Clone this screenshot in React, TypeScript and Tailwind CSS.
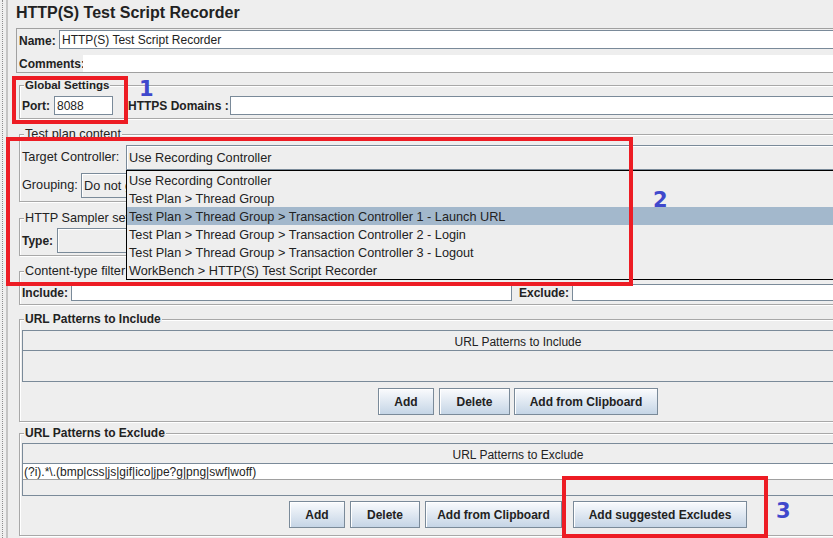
import React from 'react'

const font = { fontFamily: '"Liberation Sans", Arial, sans-serif' }

function Group({ title, className, small, children }: { title: string; className: string; small?: boolean; children?: React.ReactNode }) {
  return (
    <div className={`relative mx-[3px] border border-[#a8a8a8] shadow-[inset_1px_1px_0_#ffffff,1px_1px_0_#ffffff] ${className}`}>
      <span
        className={`absolute left-[4px] top-[-8px] bg-[#eeeeee] px-[1px] leading-[15px] font-bold text-[#222] ${small ? 'text-[11.5px]' : 'text-[12px]'}`}
      >
        {title}
      </span>
      {children}
    </div>
  )
}

// title partly hidden behind the open popup, so it is clipped at the popup's left edge
function GroupPlain({ title, className, children }: { title: string; className: string; children?: React.ReactNode }) {
  return (
    <div className={`relative mx-[3px] border border-[#a8a8a8] shadow-[inset_1px_1px_0_#ffffff,1px_1px_0_#ffffff] ${className}`}>
      <span className="absolute left-[4px] top-[-8px] max-w-[102px] overflow-hidden whitespace-nowrap bg-[#eeeeee] px-[1px] leading-[15px] text-[12.7px] text-[#222]">
        {title}
      </span>
      {children}
    </div>
  )
}

function Btn({ label, w }: { label: string; w: string }) {
  return (
    <div
      className={`${w} h-[27px] flex items-center justify-center border border-[#7a8a99] bg-linear-to-b from-[#fafbfd] to-[#c5d5e6] text-[12px] font-bold text-[#222] shadow-[inset_1px_1px_0_#ffffff]`}
    >
      {label}
    </div>
  )
}

const popupItems = [
  'Use Recording Controller',
  'Test Plan > Thread Group',
  'Test Plan > Thread Group > Transaction Controller 1 - Launch URL',
  'Test Plan > Thread Group > Transaction Controller 2 - Login',
  'Test Plan > Thread Group > Transaction Controller 3 - Logout',
  'WorkBench > HTTP(S) Test Script Recorder',
]

const numFont = { fontFamily: '"DejaVu Sans", sans-serif' }

export default function App() {
  return (
    <div className="relative w-[833px] h-[538px] overflow-hidden bg-[#eeeeee] text-[#222]" style={font}>
      <div className="flex">
        {/* window edge */}
        <div className="w-[16px] h-[538px] flex shrink-0">
          <div className="ml-[2px] w-[1px] h-full border-l border-dotted border-[#8c8c8c]" />
          <div className="ml-[3px] w-[2px] h-full bg-[#c4c4c4]" />
        </div>

        <div className="w-[1004px] shrink-0">
          {/* title */}
          <div className="h-[28px] text-[16px] font-bold leading-[26px]">HTTP(S) Test Script Recorder</div>

          {/* name / comments */}
          <div className="border border-[#a0a0a0] h-[45px]">
            <div className="mt-[1px] flex h-[19px] items-center">
              <span className="w-[42px] pl-[2px] pt-[2px] text-[12px] font-bold">Name:</span>
              <div className="flex-1 h-[19px] bg-white border border-[#7a8a99] pl-[2px] text-[12px] leading-[19px]">
                HTTP(S) Test Script Recorder
              </div>
            </div>
            <div className="mt-[6px] flex h-[17px] items-center">
              <span className="w-[66px] pl-[2px] pt-[1px] text-[12px] font-bold">Comments:</span>
              <div className="flex-1 h-[17px] bg-white" />
            </div>
          </div>

          {/* global settings */}
          <Group title="Global Settings" small className="mt-[12px] h-[34px]">
            <div className="mt-[10px] flex h-[19px] items-center">
              <span className="w-[34px] pl-[2px] pt-[1px] text-[12px] font-bold">Port:</span>
              <div className="w-[59px] h-[19px] bg-white border border-[#7a8a99] pl-[2px] text-[12px] leading-[18px]">8088</div>
              <span className="ml-[15px] w-[102px] pt-[1px] text-[12px] font-bold">HTTPS Domains :</span>
              <div className="flex-1 h-[19px] bg-white border border-[#7a8a99]" />
            </div>
          </Group>

          {/* test plan content */}
          <GroupPlain title="Test plan content" className="mt-[15px] h-[68px]">
            <div className="mt-[10px] flex h-[25px] items-center">
              <span className="w-[106px] pl-[2px] pt-[1px] text-[12.7px]">Target Controller:</span>
              <div className="flex-1 h-[25px] bg-[#eeeeee] border border-[#7a8a99] shadow-[inset_1px_1px_0_#ffffff] pl-[2px] text-[12.7px] leading-[24px]">
                Use Recording Controller
              </div>
            </div>
            <div className="mt-[3px] flex h-[25px] items-center">
              <span className="w-[61px] pl-[2px] pt-[1px] text-[12.7px]">Grouping:</span>
              <div className="w-[330px] h-[25px] bg-[#eeeeee] border border-[#7a8a99] shadow-[inset_1px_1px_0_#ffffff] pl-[2px] text-[12.7px] leading-[24px]">
                <span className="block w-[42px] overflow-hidden whitespace-nowrap">Do not group samplers</span>
              </div>
            </div>
          </GroupPlain>

          {/* http sampler settings */}
          <GroupPlain title="HTTP Sampler settings" className="mt-[16px] h-[38px]">
            <div className="mt-[9px] flex h-[25px] items-center">
              <span className="w-[37px] pl-[2px] pt-[1px] text-[12px] font-bold">Type:</span>
              <div className="w-[260px] h-[25px] bg-[#eeeeee] border border-[#7a8a99] shadow-[inset_1px_1px_0_#ffffff]" />
            </div>
          </GroupPlain>

          {/* content-type filter */}
          <GroupPlain title="Content-type filter" className="mt-[15px] h-[34px]">
            <div className="mt-[12px] flex h-[17px] items-center">
              <span className="w-[51px] pl-[2px] text-[12px] font-bold">Include:</span>
              <div className="w-[441px] h-[17px] bg-white border border-[#7a8a99]" />
              <span className="ml-[7px] w-[53px] text-[12px] font-bold">Exclude:</span>
              <div className="flex-1 h-[17px] bg-white border border-[#7a8a99]" />
            </div>
          </GroupPlain>

          {/* url include */}
          <Group title="URL Patterns to Include" className="mt-[14px] h-[103px]">
            <div className="mx-[2px] mt-[10px] h-[52px] border border-[#7a8a99]">
              <div className="h-[20px] border-b border-[#7a8a99] pt-[1px] text-center text-[12px] leading-[20px]">URL Patterns to Include</div>
            </div>
            <div className="mt-[6px] flex justify-center">
              <Btn label="Add" w="w-[56px]" />
              <div className="ml-[5px]"><Btn label="Delete" w="w-[71px]" /></div>
              <div className="ml-[4px]"><Btn label="Add from Clipboard" w="w-[144px]" /></div>
            </div>
          </Group>

          {/* url exclude */}
          <Group title="URL Patterns to Exclude" className="mt-[11px] h-[103px]">
            <div className="mx-[2px] mt-[9px] h-[53px] border border-[#7a8a99]">
              <div className="h-[20px] border-b border-[#7a8a99] pt-[1px] text-center text-[12px] leading-[20px]">URL Patterns to Exclude</div>
              <div className="h-[16px] bg-white border-b border-[#a0a0a0] pl-[1px] text-[12px] leading-[16px]">
                {'(?i).*\\.(bmp|css|js|gif|ico|jpe?g|png|swf|woff)'}
              </div>
            </div>
            <div className="mt-[5px] flex justify-center">
              <Btn label="Add" w="w-[56px]" />
              <div className="ml-[5px]"><Btn label="Delete" w="w-[70px]" /></div>
              <div className="ml-[5px]"><Btn label="Add from Clipboard" w="w-[137px]" /></div>
              <div className="ml-[11px]"><Btn label="Add suggested Excludes" w="w-[174px]" /></div>
            </div>
          </Group>
        </div>
      </div>

      {/* open combo popup */}
      <div className="absolute left-[126px] top-[170px] w-[900px] h-[110px] border border-black bg-[#eeeeee]">
        {popupItems.map((item, i) => (
          <div
            key={item}
            className={`h-[18px] pl-[2px] pt-[2px] text-[12.7px] leading-[17px] ${i === 2 ? 'bg-[#a3b8cc]' : ''}`}
          >
            {item}
          </div>
        ))}
      </div>

      {/* annotations */}
      <div className="absolute left-[12px] top-[76px] w-[116px] h-[48px] border-[4px] border-[#ed1c24]" />
      <div className="absolute left-[6px] top-[137px] w-[627px] h-[149px] border-[4px] border-[#ed1c24]" />
      <div className="absolute left-[562px] top-[476px] w-[206px] h-[62px] border-[4px] border-[#ed1c24]" />
      <span className="absolute left-[139px] top-[79px] text-[21px] font-bold leading-[20px] text-[#3f48cc]" style={numFont}>1</span>
      <span className="absolute left-[653px] top-[190px] text-[21px] font-bold leading-[20px] text-[#3f48cc]" style={numFont}>2</span>
      <span className="absolute left-[776px] top-[501px] text-[21px] font-bold leading-[20px] text-[#3f48cc]" style={numFont}>3</span>
    </div>
  )
}
